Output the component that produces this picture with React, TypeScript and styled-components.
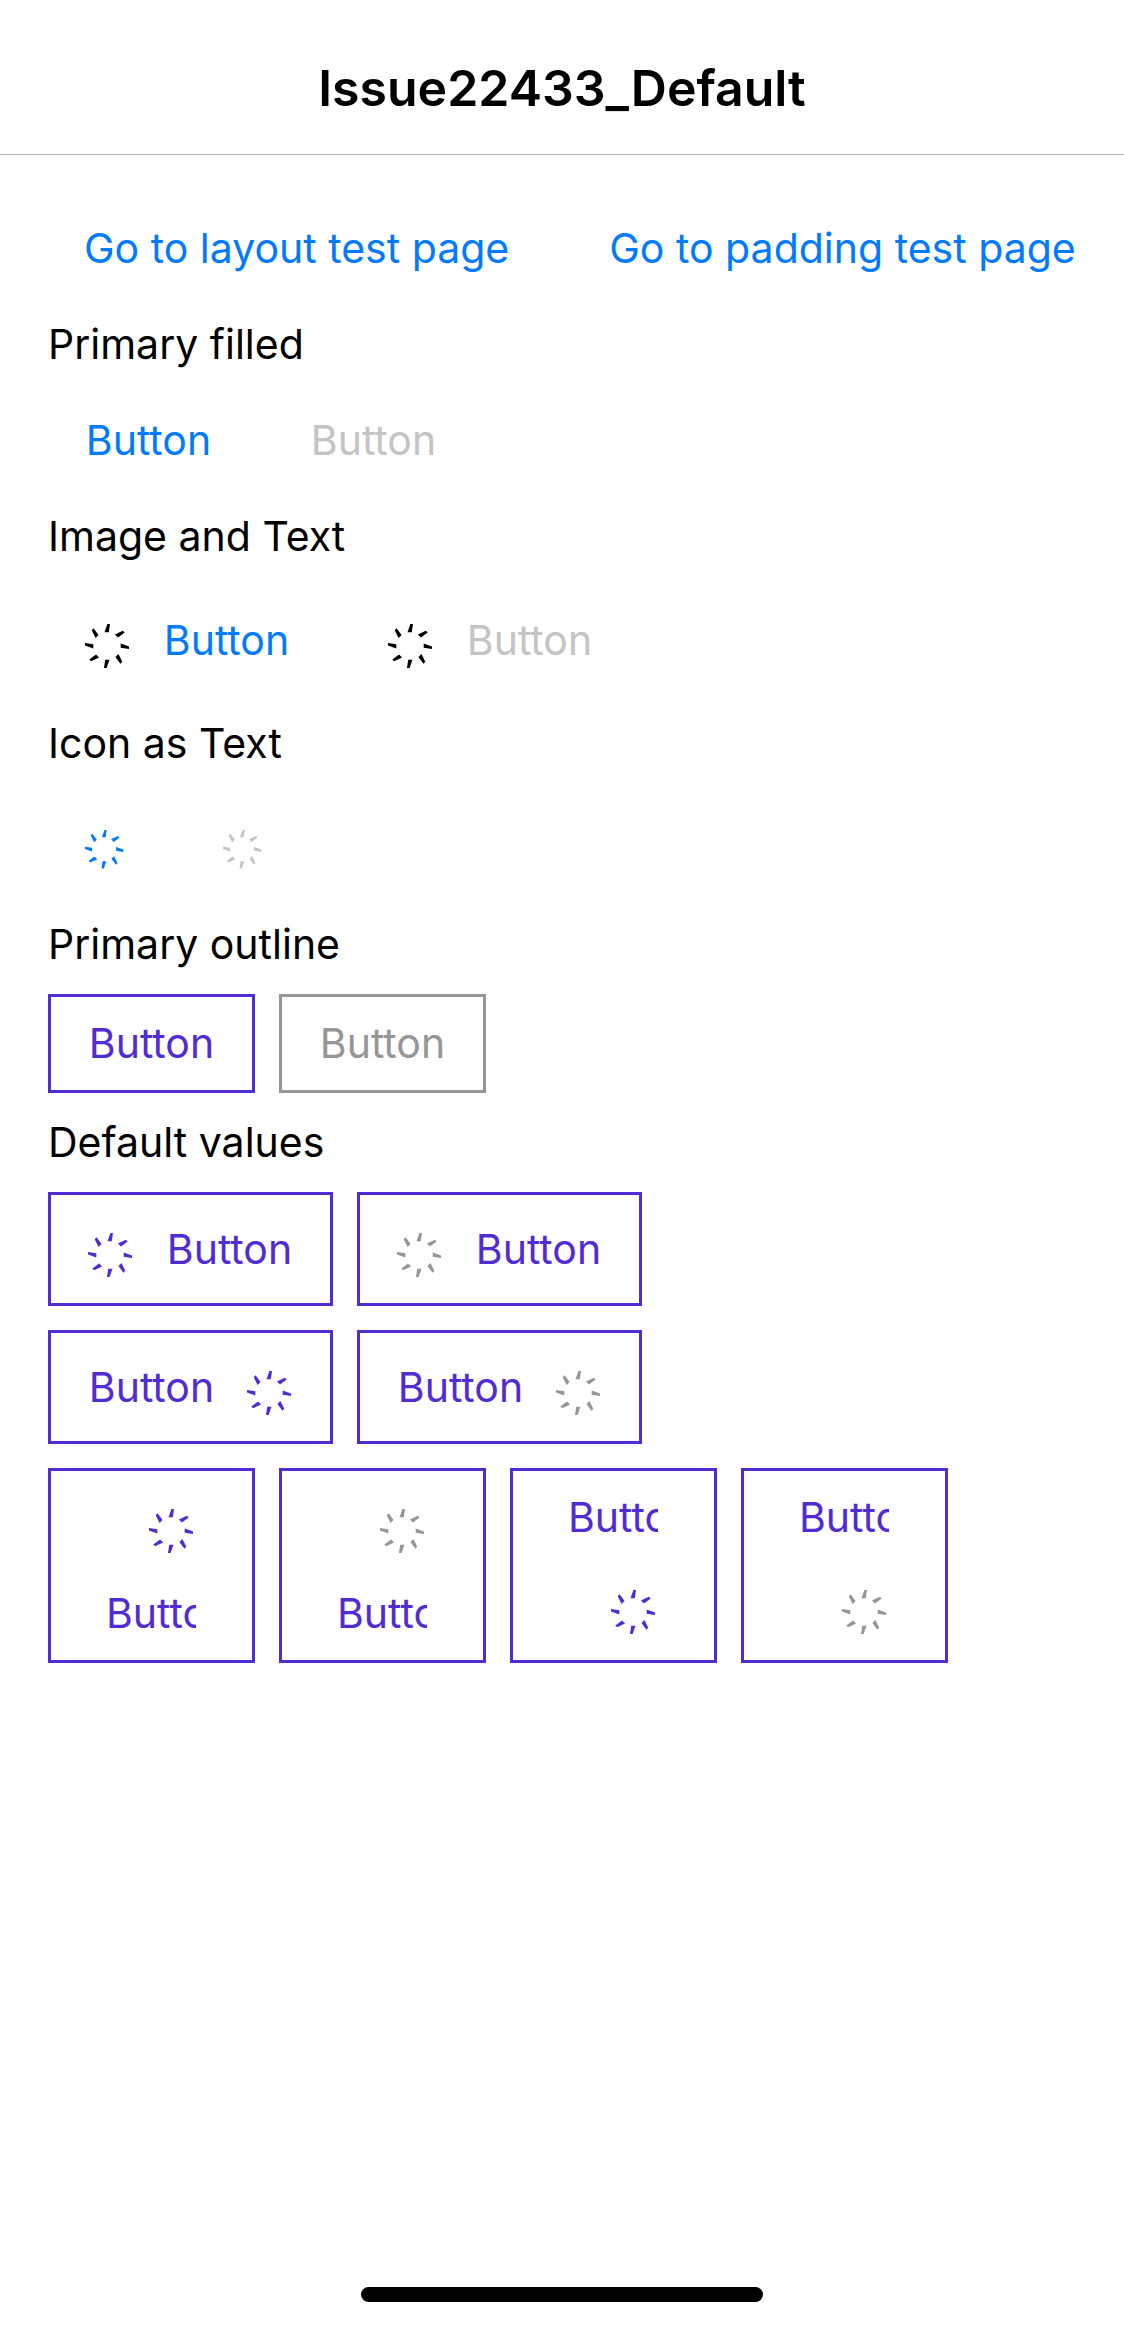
import React from "react";
import styled, { createGlobalStyle, css } from "styled-components";

const colors = {
  text: "#000000",
  link: "#007aff",
  linkDisabled: "#c4c4c4",
  primary: "#512bd4",
  disabled: "#969696",
  separator: "#b3b3b3",
};

const GlobalStyle = createGlobalStyle`
  *, *::before, *::after { box-sizing: border-box; }
  body {
    margin: 0;
    background: #ffffff;
    color: ${colors.text};
    font-family: Inter, "Liberation Sans", sans-serif;
  }
`;

const Page = styled.div`
  display: flex;
  flex-direction: column;
  min-height: 100vh;
  overflow-x: hidden;
`;

const NavBar = styled.header`
  display: flex;
  justify-content: center;
  padding: 58px 48px 36px;
  box-shadow: 0 1px 0 ${colors.separator};
`;

const Title = styled.h1`
  margin: 0;
  font-size: 50px;
  line-height: 60px;
  font-weight: 600;
`;

const Content = styled.main`
  display: flex;
  flex-direction: column;
  gap: 24px;
  padding: 48px 12px 48px 48px;
`;

const SectionLabel = styled.h2`
  margin: 0;
  font-size: 41px;
  line-height: 51px;
  font-weight: 400;
`;

const Row = styled.div<{ $gap?: number }>`
  display: flex;
  gap: ${(p) => p.$gap ?? 24}px;
`;

type Variant = "plain" | "outline";
type ImagePosition = "left" | "right" | "top" | "bottom";

const directions: Record<ImagePosition, string> = {
  left: "row",
  right: "row-reverse",
  top: "column",
  bottom: "column-reverse",
};

const isStacked = (position: ImagePosition) =>
  position === "top" || position === "bottom";

const ButtonRoot = styled.button<{
  $variant: Variant;
  $position: ImagePosition;
}>`
  display: flex;
  flex: none;
  flex-direction: ${(p) => directions[p.$position]};
  align-items: center;
  justify-content: center;
  gap: 30px;
  margin: 0;
  padding: 21px 36px;
  border: 0;
  background: transparent;
  color: ${colors.link};
  font: inherit;
  font-size: 41px;
  line-height: 51px;
  white-space: nowrap;
  cursor: pointer;

  &:disabled {
    color: ${colors.linkDisabled};
    cursor: default;
  }

  ${(p) =>
    p.$variant === "outline" &&
    css`
      border: 3px solid ${colors.primary};
      color: ${colors.primary};

      &:disabled {
        border-color: ${colors.disabled};
        color: ${colors.disabled};
      }
    `}

  ${(p) =>
    isStacked(p.$position) &&
    css`
      width: 207px;
      padding: 21px 56px 21px 55px;
      align-items: flex-end;
    `}
`;

const Caption = styled.span<{ $short: boolean }>`
  min-width: ${(p) => (p.$short ? "129px" : "0")};
  text-align: center;
`;

/* Stacked buttons only leave the caption a narrow column and cut off the rest. */
const ClippedCaption = styled.span`
  width: 90px;
  overflow: hidden;
  text-align: left;
`;

const Spinner = styled.svg<{ $color: string; $small?: boolean }>`
  display: block;
  flex: none;
  width: ${(p) => (p.$small ? "42px" : "48px")};
  height: ${(p) => (p.$small ? "60px" : "66px")};
  fill: ${(p) => p.$color};
`;

const spokes = [0, 45, 90, 135, 180, 225, 270, 315];

function SpinnerIcon({ color, small }: { color: string; small?: boolean }) {
  return (
    <Spinner $color={color} $small={small} viewBox="0 0 48 66" aria-hidden="true">
      <g transform="translate(23 39)">
        {spokes.map((angle) => (
          <path
            key={angle}
            d="M0.4 -22H3L1.8 -13.7H-2.5Z"
            transform={`rotate(${angle})`}
          />
        ))}
      </g>
    </Spinner>
  );
}

interface ActionButtonProps {
  text: string;
  variant?: Variant;
  disabled?: boolean;
  icon?: string;
  position?: ImagePosition;
}

function ActionButton({
  text,
  variant = "plain",
  disabled,
  icon,
  position = "left",
}: ActionButtonProps) {
  return (
    <ButtonRoot
      type="button"
      $variant={variant}
      $position={position}
      disabled={disabled}
    >
      {icon && <SpinnerIcon color={icon} />}
      {isStacked(position) ? (
        <ClippedCaption>{text}</ClippedCaption>
      ) : (
        <Caption $short={text === "Button"}>{text}</Caption>
      )}
    </ButtonRoot>
  );
}

function GlyphButton({ disabled }: { disabled?: boolean }) {
  return (
    <ButtonRoot
      type="button"
      $variant="plain"
      $position="left"
      disabled={disabled}
      aria-label="Loading"
    >
      <SpinnerIcon color="currentColor" small />
    </ButtonRoot>
  );
}

const HomeIndicator = styled.div`
  align-self: center;
  width: 402px;
  max-width: 80%;
  height: 15px;
  margin: auto 0 24px;
  border-radius: 8px;
  background: #000000;
`;

export default function App() {
  return (
    <Page>
      <GlobalStyle />
      <NavBar>
        <Title>Issue22433_Default</Title>
      </NavBar>
      <Content>
        <Row $gap={28}>
          <ActionButton text="Go to layout test page" />
          <ActionButton text="Go to padding test page" />
        </Row>

        <SectionLabel>Primary filled</SectionLabel>
        <Row>
          <ActionButton text="Button" />
          <ActionButton text="Button" disabled />
        </Row>

        <SectionLabel>Image and Text</SectionLabel>
        <Row>
          <ActionButton text="Button" icon={colors.text} />
          <ActionButton text="Button" icon={colors.text} disabled />
        </Row>

        <SectionLabel>Icon as Text</SectionLabel>
        <Row>
          <GlyphButton />
          <GlyphButton disabled />
        </Row>

        <SectionLabel>Primary outline</SectionLabel>
        <Row>
          <ActionButton text="Button" variant="outline" />
          <ActionButton text="Button" variant="outline" disabled />
        </Row>

        <SectionLabel>Default values</SectionLabel>
        {(["left", "right"] as const).map((position) => (
          <Row key={position}>
            {[colors.primary, colors.disabled].map((icon) => (
              <ActionButton
                key={icon}
                text="Button"
                variant="outline"
                icon={icon}
                position={position}
              />
            ))}
          </Row>
        ))}
        <Row>
          {(["top", "bottom"] as const).map((position) =>
            [colors.primary, colors.disabled].map((icon) => (
              <ActionButton
                key={position + icon}
                text="Button"
                variant="outline"
                icon={icon}
                position={position}
              />
            ))
          )}
        </Row>
      </Content>
      <HomeIndicator />
    </Page>
  );
}
